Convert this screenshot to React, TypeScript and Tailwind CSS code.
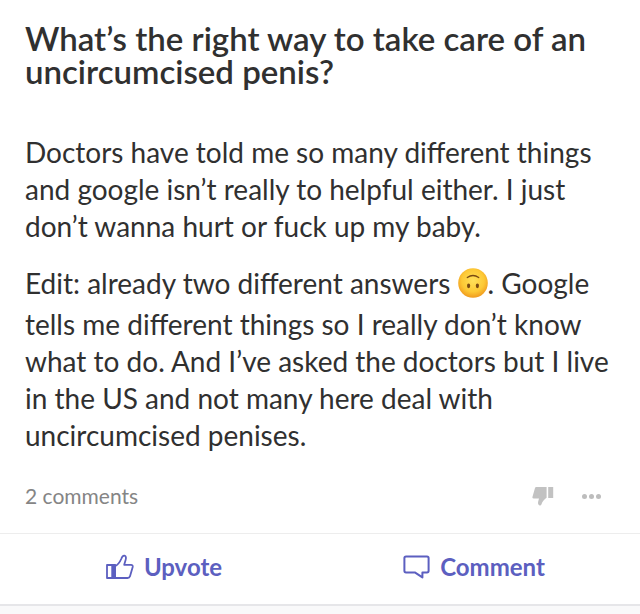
function UpsideDownFace() {
  return (
    <svg
      role="img"
      aria-label="upside-down face"
      viewBox="0 0 30 30"
      className="inline-block h-[30px] w-[30px] mb-2 align-[-12px]"
    >
      <defs>
        <radialGradient id="face" cx="50%" cy="42%" r="58%">
          <stop offset="0%" stopColor="#ffe05a" />
          <stop offset="65%" stopColor="#fdc935" />
          <stop offset="100%" stopColor="#f09a1e" />
        </radialGradient>
      </defs>
      <circle cx="15" cy="15" r="14.8" fill="url(#face)" />
      <path d="M9.3 9.6Q15 5.4 20.7 9.6" fill="none" stroke="#7a4a12" strokeWidth="1.3" strokeLinecap="round" />
      <ellipse cx="10.6" cy="17.8" rx="1.6" ry="2.4" fill="#7a4a12" />
      <ellipse cx="19.4" cy="17.8" rx="1.6" ry="2.4" fill="#7a4a12" />
    </svg>
  );
}

function ThumbDown() {
  return (
    <svg viewBox="0 0 22 20" className="h-5 w-[22px]" fill="#c2c2c2" aria-hidden="true">
      <path d="M4.2 1H14.6V11.8C12.4 13.4 10.4 15.2 9.4 18.4C9 19.4 8.4 19.6 7.6 19.4C6 19 5.8 17.4 6.2 15.6L7 12.4H1.6C.6 12.4.2 11.8.5 10.8L3 2C3.2 1.3 3.6 1 4.2 1Z" />
      <path d="M16.2 1H21.2V12H16.2Z" />
    </svg>
  );
}

function ThumbUp() {
  return (
    <svg
      viewBox="0 0 28 26"
      className="h-[26px] w-7"
      fill="none"
      stroke="#5c5fc0"
      strokeWidth="1.8"
      strokeLinejoin="round"
      aria-hidden="true"
    >
      <path d="M1 11H9V24H1Z" />
      <path d="M6.2 11H9V24H6.2Z" fill="#5c5fc0" />
      <path d="M9 12.2C11.5 11 13.8 8.2 15.2 5C16 2.6 17 1.4 18.4 1.6C20.2 2 20.2 4.2 19.6 6L18.2 10.8H25C26.4 10.8 27 11.8 26.7 13L24 22.2C23.6 23.6 23 24 21.6 24H9" />
    </svg>
  );
}

function CommentBubble() {
  return (
    <svg
      viewBox="0 0 27 24"
      className="h-6 w-[27px]"
      fill="none"
      stroke="#5c5fc0"
      strokeWidth="2"
      strokeLinejoin="round"
      aria-hidden="true"
    >
      <path d="M3 1.4H24Q25.6 1.4 25.6 3V15.8Q25.6 17.4 24 17.4H19.4V22.4L11.8 17.4H3Q1.4 17.4 1.4 15.8V3Q1.4 1.4 3 1.4Z" />
    </svg>
  );
}

export default function App() {
  return (
    <div className="min-h-screen bg-[#f9f9fa] font-['Lato',sans-serif] text-[#303030]">
      <article className="border-b-2 border-[#e6e6e9] bg-white pt-[22px]">
        <div className="px-[25px]">
          <h1 className="text-[33px] font-semibold leading-[33px]">
            What’s the right way to take care of an
            <br />
            uncircumcised penis?
          </h1>

          <div className="mt-[46px] space-y-5 text-[28px] leading-[37px]">
            <p>
              Doctors have told me so many different things
              <br />
              and google isn’t really to helpful either. I just
              <br />
              don’t wanna hurt or fuck up my baby.
            </p>
            <p>
              Edit: already two different answers <UpsideDownFace />. Google
              <br />
              tells me different things so I really don’t know
              <br />
              what to do. And I’ve asked the doctors but I live
              <br />
              in the US and not many here deal with
              <br />
              uncircumcised penises.
            </p>
          </div>

          <div className="mt-7 flex items-center justify-between pb-[23px]">
            <a href="#comments" className="text-[21px] leading-7 text-[#858585]">
              2 comments
            </a>
            <div className="flex items-center gap-7 pr-[14px]">
              <button type="button" aria-label="Downvote">
                <ThumbDown />
              </button>
              <button type="button" aria-label="More options" className="flex gap-[2px]">
                <span className="size-[5px] rounded-full bg-[#bdbdbd]" />
                <span className="size-[5px] rounded-full bg-[#bdbdbd]" />
                <span className="size-[5px] rounded-full bg-[#bdbdbd]" />
              </button>
            </div>
          </div>
        </div>

        <div className="grid grid-cols-2 border-t border-[#ededed] text-2xl font-bold text-[#5c5fc0]">
          <button type="button" className="flex h-[70px] items-center justify-center gap-[10px] pb-1 pl-2">
            <ThumbUp />
            Upvote
          </button>
          <button type="button" className="flex h-[70px] items-center justify-center gap-[10px] pr-3 pb-1">
            <CommentBubble />
            Comment
          </button>
        </div>
      </article>
    </div>
  );
}
